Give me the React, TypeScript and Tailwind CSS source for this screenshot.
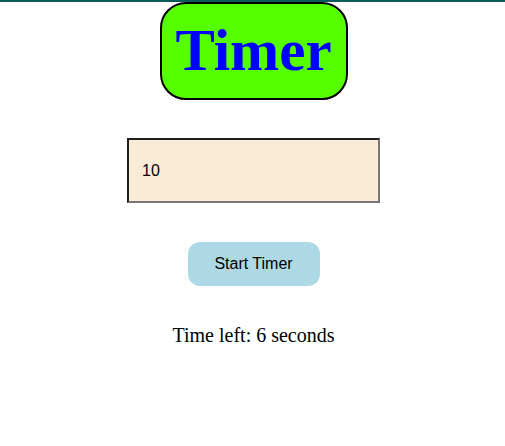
import React, { useState } from "react"

export default function App() {
  const [value, setValue] = useState("10")

  return (
    <div className="min-h-screen bg-white">
      <div className="h-[2px] bg-[#0b5a5c]" />
      <div className="flex flex-col items-center pl-[2px]">
        {/* Heading */}
        <h1 className="box-border h-[98px] w-[188px] rounded-[26px] border-2 border-black bg-[#55ff00] text-center font-['Liberation_Serif',serif] text-[59px] font-bold leading-[92px] text-[#0000ff]">
          Timer
        </h1>

        {/* Input */}
        <input
          type="text"
          value={value}
          onChange={(e) => setValue(e.target.value)}
          className="mt-[38px] box-border h-[65px] w-[253px] border-2 border-t-[#1f1f1f] border-l-[#1f1f1f] border-b-[#767676] border-r-[#767676] bg-[#faebd7] px-[13px] font-['Liberation_Sans',sans-serif] text-base text-black outline-none"
        />

        {/* Button */}
        <button className="mt-[39px] h-[44px] w-[132px] rounded-xl bg-[#add8e6] font-['Liberation_Sans',sans-serif] text-base text-black">
          Start Timer
        </button>

        {/* Countdown */}
        <p className="mt-[35px] font-['Liberation_Serif',serif] text-xl text-black">
          Time left: 6 seconds
        </p>
      </div>
    </div>
  )
}
